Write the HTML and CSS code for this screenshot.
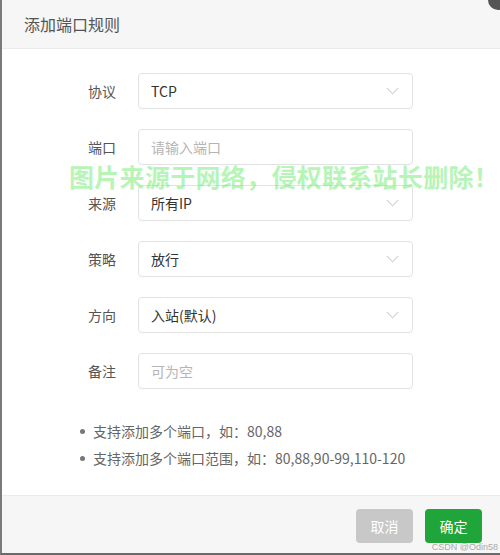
FILE: index.html
```html
<!DOCTYPE html>
<html lang="zh">
<head>
<meta charset="utf-8">
<link rel="stylesheet" href="styles.css">
</head>
<body>
<div class="modal">
  <div class="close"></div>
  <div class="header">添加端口规则</div>
  <div class="body">
    <div class="form">
      <div class="row"><label class="label">协议</label><div class="field select"><span class="value">TCP</span><svg class="chev" viewBox="0 0 14 8" width="13" height="8"><path d="M1 1 L7 7 L13 1" fill="none" stroke="#cfcfcf" stroke-width="1.1"/></svg></div></div>
      <div class="row"><label class="label">端口</label><div class="field"><span class="placeholder">请输入端口</span></div></div>
      <div class="row"><label class="label">来源</label><div class="field select"><span class="value">所有IP</span><svg class="chev" viewBox="0 0 14 8" width="13" height="8"><path d="M1 1 L7 7 L13 1" fill="none" stroke="#cfcfcf" stroke-width="1.1"/></svg></div></div>
      <div class="row"><label class="label">策略</label><div class="field select"><span class="value">放行</span><svg class="chev" viewBox="0 0 14 8" width="13" height="8"><path d="M1 1 L7 7 L13 1" fill="none" stroke="#cfcfcf" stroke-width="1.1"/></svg></div></div>
      <div class="row"><label class="label">方向</label><div class="field select"><span class="value">入站(默认)</span><svg class="chev" viewBox="0 0 14 8" width="13" height="8"><path d="M1 1 L7 7 L13 1" fill="none" stroke="#cfcfcf" stroke-width="1.1"/></svg></div></div>
      <div class="row"><label class="label">备注</label><div class="field"><span class="placeholder">可为空</span></div></div>
    </div>
    <ul class="tips">
      <li>支持添加多个端口，如：80,88</li>
      <li>支持添加多个端口范围，如：80,88,90-99,110-120</li>
    </ul>
  </div>
  <div class="footer">
    <button class="btn cancel">取消</button>
    <button class="btn ok">确定</button>
  </div>
  <div class="watermark">图片来源于网络，侵权联系站长删除！</div>
  <div class="credit">CSDN @Odin58</div>
</div>
</body>
</html>
```
FILE: styles.css
```css
html, body {
  margin: 0;
  padding: 0;
  background: #ffffff;
}
.modal {
  position: relative;
  width: 500px;
  height: 555px;
  box-sizing: border-box;
  border-left: 2px solid #7a7a7a;
  border-bottom: 2px solid #6a6a6a;
  background: #ffffff;
  font-family: "Noto Sans CJK SC", "Noto Sans", sans-serif;
  display: flex;
  flex-direction: column;
  overflow: hidden;
}
.close {
  position: absolute;
  right: -8px;
  top: -10px;
  width: 20px;
  height: 20px;
  border-radius: 50%;
  background: #555;
}
.header {
  height: 48px;
  line-height: 48px;
  padding-left: 22px;
  font-size: 16px;
  color: #555;
  background: #f6f6f6;
  border-bottom: 1px solid #ebebeb;
  flex: none;
}
.body {
  flex: 1;
  padding-top: 24px;
}
.form {
  display: flex;
  flex-direction: column;
  gap: 20px;
}
.row {
  display: flex;
  align-items: center;
  height: 36px;
}
.label {
  width: 114px;
  margin-right: 22px;
  text-align: right;
  font-size: 14px;
  color: #555;
}
.field {
  width: 275px;
  height: 36px;
  box-sizing: border-box;
  border: 1px solid #e2e2e2;
  border-radius: 4px;
  display: flex;
  align-items: center;
  padding: 0 12px;
  font-size: 14px;
}
.select {
  justify-content: space-between;
}
.value {
  color: #333;
}
.placeholder {
  color: #b5b5b5;
}
.chev {
  margin-right: 1px;
}
.tips {
  list-style: none;
  margin: 29px 0 0 0;
  padding: 0 0 0 78px;
  font-size: 14px;
  color: #666;
  line-height: 27px;
}
.tips li {
  display: flex;
  align-items: center;
}
.tips li::before {
  content: "";
  width: 5px;
  height: 5px;
  border-radius: 50%;
  background: #777;
  margin-right: 8px;
}
.footer {
  flex: none;
  height: 58px;
  box-sizing: border-box;
  background: #f6f6f6;
  border-top: 1px solid #ebebeb;
  display: flex;
  justify-content: flex-end;
  align-items: flex-start;
  padding: 13px 18px 0 0;
  gap: 12px;
}
.btn {
  width: 57px;
  height: 34px;
  border: none;
  border-radius: 4px;
  color: #fff;
  font-family: "Noto Sans CJK SC", "Noto Sans", sans-serif;
  font-size: 14px;
  padding: 0;
}
.cancel {
  background: #c8c8c8;
}
.ok {
  background: #20a53a;
}
.watermark {
  position: absolute;
  left: 67px;
  top: 158px;
  font-size: 25px;
  font-weight: bold;
  letter-spacing: 0.3px;
  color: rgba(110, 235, 110, 0.5);
  white-space: nowrap;
  pointer-events: none;
}
.credit {
  position: absolute;
  right: 2px;
  bottom: 1px;
  font-family: "Liberation Sans", sans-serif;
  font-size: 9px;
  color: #aaa;
}
```
